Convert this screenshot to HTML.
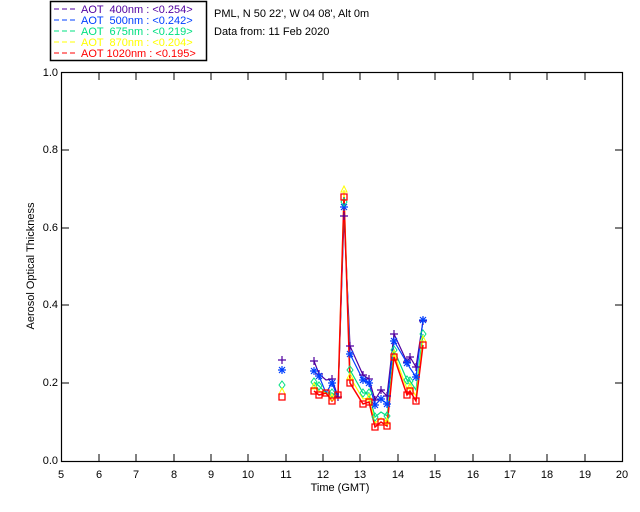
<!DOCTYPE html>
<html><head><meta charset="utf-8"><style>
html,body{margin:0;padding:0;background:#fff;width:640px;height:512px;overflow:hidden}
svg{display:block}
text{font-family:"Liberation Sans",sans-serif;font-size:11px}
</style></head><body>
<svg width="640" height="512" viewBox="0 0 640 512" xmlns="http://www.w3.org/2000/svg">
<rect x="50.5" y="1.5" width="156" height="59" fill="none" stroke="#000" stroke-width="1.5"/>
<g stroke-width="1" stroke-dasharray="5,3">
<line x1="54" y1="9" x2="77" y2="9" stroke="#5000a0"/>
<line x1="54" y1="20" x2="77" y2="20" stroke="#0040ff"/>
<line x1="54" y1="31" x2="77" y2="31" stroke="#00e080"/>
<line x1="54" y1="42" x2="77" y2="42" stroke="#ffff00"/>
<line x1="54" y1="53" x2="77" y2="53" stroke="#ff0000"/>
</g>
<text x="81" y="13" fill="#5000a0" xml:space="preserve">AOT  400nm : &lt;0.254&gt;</text>
<text x="81" y="24" fill="#0040ff" xml:space="preserve">AOT  500nm : &lt;0.242&gt;</text>
<text x="81" y="35" fill="#00e080" xml:space="preserve">AOT  675nm : &lt;0.219&gt;</text>
<text x="81" y="46" fill="#ffff00" xml:space="preserve">AOT  870nm : &lt;0.204&gt;</text>
<text x="81" y="57" fill="#ff0000" xml:space="preserve">AOT 1020nm : &lt;0.195&gt;</text>
<text x="214" y="17" fill="#000">PML, N 50 22', W 04 08', Alt 0m</text>
<text x="214" y="35" fill="#000">Data from: 11 Feb 2020</text>

<rect x="61.5" y="72.5" width="561" height="389" fill="none" stroke="#000" stroke-width="1.2"/>
<g stroke="#000" stroke-width="1">
<path d="M99 461v-7M136 461v-7M174 461v-7M211 461v-7M248 461v-7M286 461v-7M323 461v-7M360 461v-7M398 461v-7M435 461v-7M473 461v-7M510 461v-7M547 461v-7M585 461v-7
M99 73v7M136 73v7M174 73v7M211 73v7M248 73v7M286 73v7M323 73v7M360 73v7M398 73v7M435 73v7M473 73v7M510 73v7M547 73v7M585 73v7
M62 383h7M62 305h7M62 228h7M62 150h7M622 383h-7M622 305h-7M622 228h-7M622 150h-7"/>
</g>
<g fill="#000" text-anchor="end">
<text x="58" y="464">0.0</text><text x="58" y="386">0.2</text><text x="58" y="308">0.4</text><text x="58" y="231">0.6</text><text x="58" y="153">0.8</text><text x="58" y="76">1.0</text>
</g>
<g fill="#000" text-anchor="middle">
<text x="61" y="478">5</text><text x="99" y="478">6</text><text x="136" y="478">7</text><text x="174" y="478">8</text><text x="211" y="478">9</text><text x="248" y="478">10</text><text x="286" y="478">11</text><text x="323" y="478">12</text><text x="360" y="478">13</text><text x="398" y="478">14</text><text x="435" y="478">15</text><text x="473" y="478">16</text><text x="510" y="478">17</text><text x="547" y="478">18</text><text x="585" y="478">19</text><text x="622" y="478">20</text>
<text x="340" y="491">Time (GMT)</text>
<text transform="translate(34,266) rotate(-90)">Aerosol Optical Thickness</text>
</g>

<g fill="none" stroke-width="1.2">
<polyline stroke="#5000a0" points="314,361 319,374 326,380 332,379 338,397 344,216 350,346 363,375 369,379 375,400 381,390 387,396 394,334 407,362 410,357 416,367 423,321"/>
<polyline stroke="#0040ff" points="314,371 319,376 326,393 332,383 338,398 344,207 350,354 363,380 369,383 375,405 381,399 387,404 394,341 407,363 410,368 416,377 423,320"/>
<polyline stroke="#00e080" points="314,382 319,386 326,393 332,393 338,397 344,202 350,370 363,393 369,393 375,417 381,412 387,416 394,350 407,380 410,381 416,390 423,334"/>
<polyline stroke="#ffff00" points="314,387 319,391 326,393 332,398 338,396 344,190 350,377 363,399 369,398 375,423 381,418 387,422 394,354 407,389 410,387 416,396 423,340"/>
<polyline stroke="#ff0000" stroke-width="1.5" points="314,391 319,395 326,393 332,401 338,395 344,197 350,383 363,404 369,402 375,427 381,422 387,426 394,357 407,395 410,391 416,401 423,345"/>
</g>
<g stroke="#5000a0" stroke-width="1.2" fill="none">
<path d="M278 360h8M282 356v8 M310 361h8M314 357v8 M315 374h8M319 370v8 M328 379h8M332 375v8 M334 397h8M338 393v8 M340 216h8M344 212v8 M346 346h8M350 342v8 M359 375h8M363 371v8 M365 379h8M369 375v8 M371 400h8M375 396v8 M377 390h8M381 386v8 M383 396h8M387 392v8 M390 334h8M394 330v8 M403 362h8M407 358v8 M406 357h8M410 353v8 M412 367h8M416 363v8 M419 321h8M423 317v8"/>
</g>
<g stroke="#0040ff" stroke-width="1.2" fill="none">
<path d="M278 370h8M282 366v8M279 367l6 6M285 367l-6 6 M310 371h8M314 367v8M311 368l6 6M317 368l-6 6 M315 376h8M319 372v8M316 373l6 6M322 373l-6 6 M328 383h8M332 379v8M329 380l6 6M335 380l-6 6 M340 207h8M344 203v8M341 204l6 6M347 204l-6 6 M346 354h8M350 350v8M347 351l6 6M353 351l-6 6 M359 380h8M363 376v8M360 377l6 6M366 377l-6 6 M365 383h8M369 379v8M366 380l6 6M372 380l-6 6 M371 405h8M375 401v8M372 402l6 6M378 402l-6 6 M377 399h8M381 395v8M378 396l6 6M384 396l-6 6 M383 404h8M387 400v8M384 401l6 6M390 401l-6 6 M390 341h8M394 337v8M391 338l6 6M397 338l-6 6 M403 363h8M407 359v8M404 360l6 6M410 360l-6 6 M412 377h8M416 373v8M413 374l6 6M419 374l-6 6 M419 320h8M423 316v8M420 317l6 6M426 317l-6 6"/>
</g>
<g stroke="#00e080" stroke-width="1" fill="none">
<path d="M282 381l3 4-3 4-3-4z M314 378l3 4-3 4-3-4z M319 382l3 4-3 4-3-4z M332 389l3 4-3 4-3-4z M344 198l3 4-3 4-3-4z M350 366l3 4-3 4-3-4z M363 389l3 4-3 4-3-4z M369 389l3 4-3 4-3-4z M375 413l3 4-3 4-3-4z M387 412l3 4-3 4-3-4z M394 346l3 4-3 4-3-4z M407 376l3 4-3 4-3-4z M410 377l3 4-3 4-3-4z M423 330l3 4-3 4-3-4z"/>
</g>
<g stroke="#ffff00" stroke-width="1" fill="none">
<path d="M282 388l3 6h-6z M314 383l3 6h-6z M332 394l3 6h-6z M344 186l3 6h-6z M350 373l3 6h-6z M369 394l3 6h-6z M387 418l3 6h-6z M394 350l3 6h-6z M410 383l3 6h-6z M423 336l3 6h-6z"/>
</g>
<g stroke="#ff0000" stroke-width="1.3" fill="none">
<path d="M279 394h6v6h-6z M311 388h6v6h-6z M316 392h6v6h-6z M323 390h6v6h-6z M329 398h6v6h-6z M335 392h6v6h-6z M341 194h6v6h-6z M347 380h6v6h-6z M360 401h6v6h-6z M366 399h6v6h-6z M372 424h6v6h-6z M378 419h6v6h-6z M384 423h6v6h-6z M391 354h6v6h-6z M404 392h6v6h-6z M407 388h6v6h-6z M413 398h6v6h-6z M420 342h6v6h-6z"/>
</g>
</svg>
</body></html>
